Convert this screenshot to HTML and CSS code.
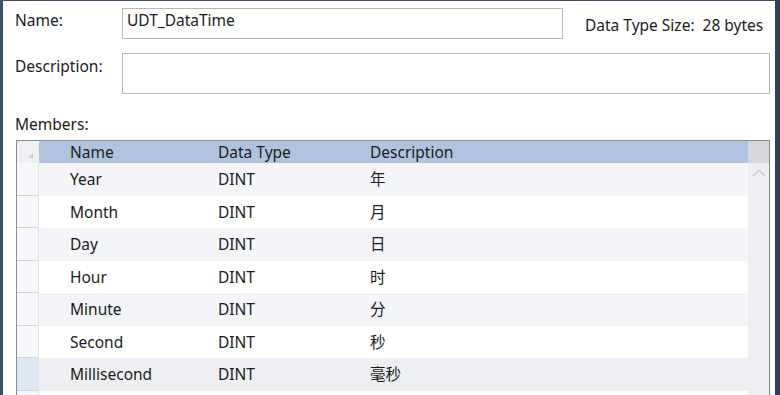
FILE: index.html
```html
<!DOCTYPE html>
<html>
<head>
<meta charset="utf-8">
<link rel="stylesheet" href="styles.css">
</head>
<body>
<div class="window">
  <div class="content">
    <div class="row-name">
      <div class="label">Name:</div>
      <div class="input name-input">UDT_DataTime</div>
      <div class="size">Data Type Size:&nbsp; 28 bytes</div>
    </div>
    <div class="row-desc">
      <div class="label">Description:</div>
      <div class="input desc-input"></div>
    </div>
    <div class="members-label">Members:</div>
    <div class="grid">
      <div class="grid-head">
        <div class="corner"><span class="tri"></span></div>
        <div class="hcell c-name">Name</div>
        <div class="hcell c-type">Data Type</div>
        <div class="hcell c-desc">Description</div>
        <div class="sb-head"></div>
      </div>
      <div class="grid-body">
        <div class="rows">
          <div class="row alt"><div class="rh"></div><div class="cell c-name">Year</div><div class="cell c-type">DINT</div><div class="cell c-desc">年</div></div>
          <div class="row"><div class="rh"></div><div class="cell c-name">Month</div><div class="cell c-type">DINT</div><div class="cell c-desc">月</div></div>
          <div class="row alt"><div class="rh"></div><div class="cell c-name">Day</div><div class="cell c-type">DINT</div><div class="cell c-desc">日</div></div>
          <div class="row"><div class="rh"></div><div class="cell c-name">Hour</div><div class="cell c-type">DINT</div><div class="cell c-desc">时</div></div>
          <div class="row alt"><div class="rh"></div><div class="cell c-name">Minute</div><div class="cell c-type">DINT</div><div class="cell c-desc">分</div></div>
          <div class="row"><div class="rh"></div><div class="cell c-name">Second</div><div class="cell c-type">DINT</div><div class="cell c-desc">秒</div></div>
          <div class="row sel"><div class="rh"></div><div class="cell c-name">Millisecond</div><div class="cell c-type">DINT</div><div class="cell c-desc">毫秒</div></div>
          <div class="row"><div class="rh"></div><div class="cell c-name"></div><div class="cell c-type"></div><div class="cell c-desc"></div></div>
        </div>
        <div class="sb">
          <svg class="up" width="14" height="8" viewBox="0 0 14 8"><path d="M1 7 L7 1.5 L13 7" fill="none" stroke="#c9cbd0" stroke-width="1.6"/></svg>
        </div>
      </div>
    </div>
  </div>
</div>
</body>
</html>
```
FILE: styles.css
```css
html, body {
  margin: 0;
  padding: 0;
  background: #fff;
}
body {
  font-family: "Noto Sans", "Noto Sans CJK SC", sans-serif;
  font-size: 15.5px;
  color: #1b1b1b;
  overflow: hidden;
}
.window {
  width: 780px;
  height: 395px;
  box-sizing: border-box;
  border-left: 3px solid #3e5068;
  border-top: 1px solid #3e5068;
  border-right: 5px solid #2f425c;
  background: #fff;
  overflow: hidden;
}
.content {
  padding: 7px 0 0 12px;
}
.row-name {
  display: flex;
  align-items: flex-start;
  height: 31px;
}
.label {
  width: 107px;
  line-height: 20px;
  padding-top: 2px;
}
.input {
  box-sizing: border-box;
  border: 1px solid #b5b7bc;
  background: #fff;
}
.name-input {
  width: 441px;
  height: 31px;
  padding: 1px 0 0 4px;
  line-height: 20px;
}
.size {
  margin-left: 22px;
  padding-top: 7px;
  line-height: 20px;
  white-space: nowrap;
}
.row-desc {
  display: flex;
  margin-top: 14px;
  height: 41px;
}
.row-desc .label {
  padding-top: 3px;
}
.desc-input {
  width: 648px;
  height: 41px;
}
.members-label {
  margin-top: 20px;
  line-height: 20px;
  height: 20px;
}
.grid {
  margin-top: 6px;
  margin-left: 1px;
  width: 754px;
  border: 1px solid #868b94;
  border-bottom: none;
  box-sizing: border-box;
  height: 260px;
}
.grid-head {
  display: flex;
  height: 22px;
  background: #afc3de;
}
.corner {
  width: 22px;
  background: #eef0f3;
  position: relative;
  flex: none;
}
.tri {
  position: absolute;
  right: 6px;
  bottom: 5px;
  width: 0;
  height: 0;
  border-left: 5px solid transparent;
  border-bottom: 5px solid #c9ccd1;
}
.hcell {
  line-height: 22px;
  flex: none;
}
.c-name {
  width: 179px;
  padding-left: 31px;
  box-sizing: border-box;
  flex: none;
}
.c-type {
  width: 152px;
  flex: none;
}
.c-desc {
  flex: 1;
}
.sb-head {
  width: 21px;
  background: #d5d7da;
  flex: none;
}
.grid-body {
  display: flex;
}
.rows {
  flex: 1;
}
.row {
  display: flex;
  height: 32.5px;
  line-height: 32px;
  background: #fff;
}
.row.alt {
  background: #f4f5f8;
}
.row.sel {
  background: #eeeff2;
}
.rh {
  width: 22px;
  flex: none;
  box-sizing: border-box;
  background: #f7f8fa;
  border-right: 1px solid #e3e5e9;
  border-bottom: 1px solid #d3d5d9;
}
.row.sel .rh {
  background: #dde8f5;
}
.cell {
  white-space: nowrap;
}
.sb {
  width: 21px;
  flex: none;
  background: #eceef1;
  height: 238px;
  display: flex;
  justify-content: center;
  align-items: flex-start;
  padding-top: 6px;
  box-sizing: border-box;
}
```
